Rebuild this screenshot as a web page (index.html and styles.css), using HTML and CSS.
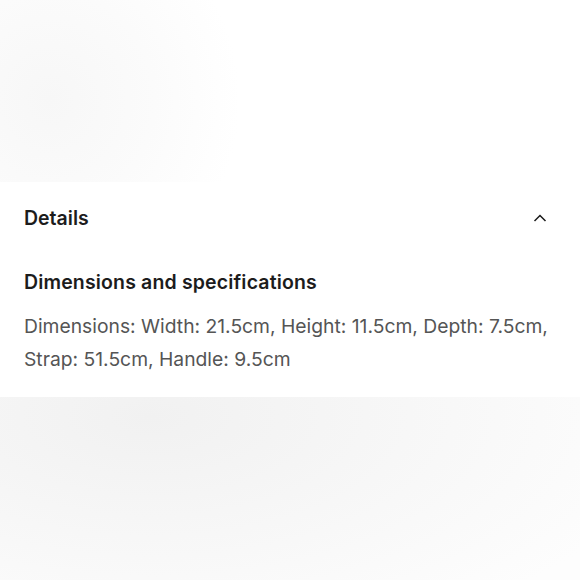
FILE: index.html
```html
<!DOCTYPE html>
<html>
<head>
<meta charset="utf-8">
<link rel="stylesheet" href="styles.css">
</head>
<body>
<div class="page">
  <div class="top-bg"></div>
  <section class="panel">
    <div class="panel-head">
      <h2 class="title">Details</h2>
      <svg class="chev" width="14" height="10" viewBox="0 0 14 10"><path d="M1.5 8 L7 2.5 L12.5 8" fill="none" stroke="#1a1a1a" stroke-width="1.5"/></svg>
    </div>
    <h3 class="subtitle">Dimensions and specifications</h3>
    <p class="body">Dimensions: Width: 21.5cm, Height: 11.5cm, Depth: 7.5cm, Strap: 51.5cm, Handle: 9.5cm</p>
  </section>
  <div class="bottom-bg"></div>
</div>
</body>
</html>
```
FILE: styles.css
```css
html, body { margin: 0; padding: 0; }
body { width: 580px; height: 580px; overflow: hidden; font-family: Inter, "Liberation Sans", sans-serif; background: #fff; }
.page { display: flex; flex-direction: column; height: 580px; }
.top-bg {
  height: 182px;
  background: radial-gradient(ellipse 190px 200px at 50px 100px, #f7f7f7 0%, #fbfbfb 55%, #ffffff 100%);
}
.panel { background: #fff; height: 215px; box-sizing: border-box; padding: 0 24px; }
.panel-head { display: flex; justify-content: space-between; align-items: center; height: 72px; }
.title { margin: 0; font-size: 19.5px; font-weight: 600; color: #1c1c1c; }
.chev { margin-right: 9px; }
.subtitle { margin: 16px 0 0; font-size: 19.5px; font-weight: 600; color: #1c1c1c; letter-spacing: 0.15px; line-height: 24px; }
.body { margin: 16px 0 0; font-size: 19.3px; font-weight: 400; color: #555; line-height: 33px; }
.bottom-bg {
  flex: 1;
  background: radial-gradient(ellipse 520px 240px at 150px 20px, #f1f1f1 0%, #f7f7f7 50%, #fdfdfd 100%);
}
```
